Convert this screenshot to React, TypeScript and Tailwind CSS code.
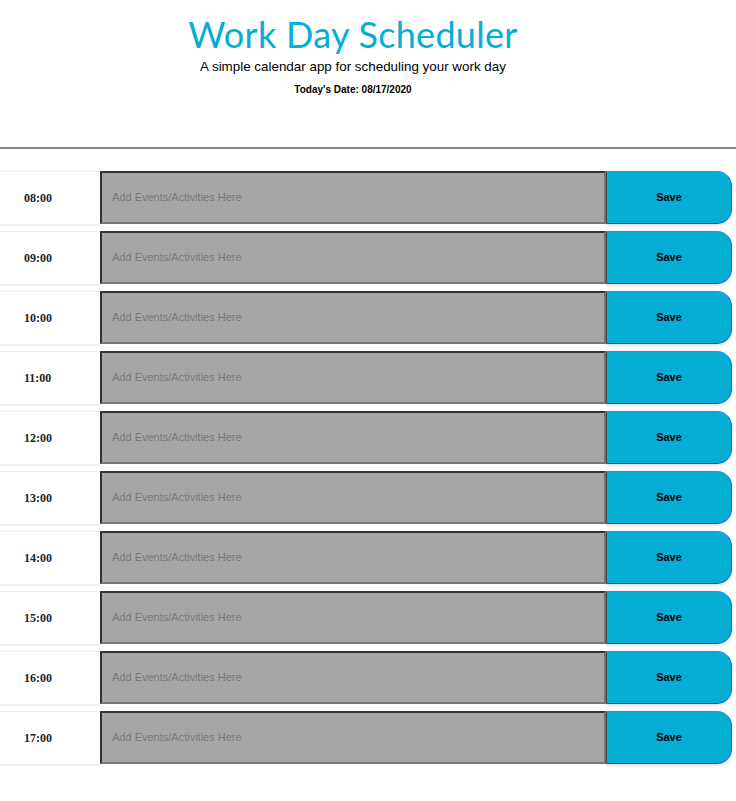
import React from "react";

const hours = ["08:00", "09:00", "10:00", "11:00", "12:00", "13:00", "14:00", "15:00", "16:00", "17:00"];

export default function App() {
  return (
    <div className="w-[736px] min-h-[801px] bg-white" style={{ fontFamily: '"Liberation Sans", Arial, sans-serif' }}>
      <header className="flex flex-col items-center pt-[12px] h-[147px] w-[706px]">
        <h1 className="text-[36px] leading-[44px] text-[#06aed5] font-normal tracking-[0.3px]" style={{ fontFamily: 'Lato, "Open Sans", sans-serif' }}>
          Work Day Scheduler
        </h1>
        <p className="text-[13.4px] leading-[20px] text-black mt-[1px]">A simple calendar app for scheduling your work day</p>
        <p className="text-[10px] leading-[14px] font-bold text-black mt-[6px]">Today's Date: 08/17/2020</p>
      </header>
      <div className="h-[2px] bg-[#888]" />
      <div className="flex flex-col gap-[7px] pt-[22px] pr-[4px]">
        {hours.map((h) => (
          <div key={h} className="flex h-[53px]">
            <div className="w-[100px] shrink-0 border-t border-[#eee] bg-white shadow-[0_2px_2px_rgba(0,0,0,0.08)] flex items-center pl-[24px]">
              <span className="text-[12px] font-bold text-[#222]" style={{ fontFamily: '"Liberation Serif", "Times New Roman", serif' }}>{h}</span>
            </div>
            <div className="w-[506px] shrink-0 bg-[#a6a6a6] border-2 border-t-[#333] border-l-[#333] border-b-[#777] border-r-[#777] flex items-center pl-[10px]">
              <span className="text-[11px] text-[#777]">Add Events/Activities Here</span>
            </div>
            <button className="flex-1 bg-[#06aed5] border border-t-[#1e8fff] border-r-[#1e6fd0] border-b-[#0a5fb0] border-l-[#444] rounded-r-[15px] flex items-center justify-center shadow-[0_2px_3px_rgba(0,0,0,0.12)]">
              <span className="text-[11px] font-bold text-black">Save</span>
            </button>
          </div>
        ))}
      </div>
    </div>
  );
}
